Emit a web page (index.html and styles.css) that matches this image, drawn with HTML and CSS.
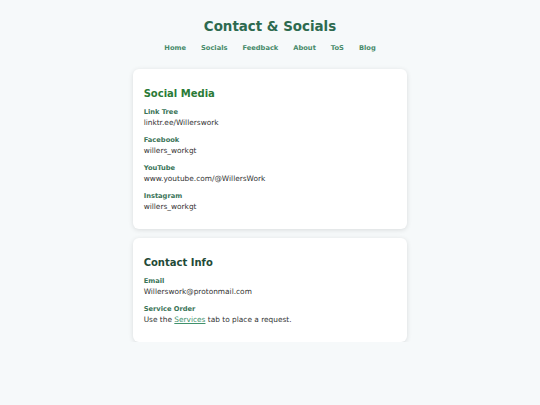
FILE: index.html
```html
<!DOCTYPE html>
<html lang="en">
<head>
<meta charset="utf-8">
<title>Contact &amp; Socials</title>
<link rel="stylesheet" href="styles.css">
</head>
<body>
  <header class="site-header">
    <h1 class="site-title">Contact &amp; Socials</h1>
    <nav class="nav">
      <a href="#">Home</a>
      <a href="#">Socials</a>
      <a href="#">Feedback</a>
      <a href="#">About</a>
      <a href="#">ToS</a>
      <a href="#">Blog</a>
    </nav>
  </header>
  <main class="main">
    <section class="card">
      <h2 class="card-title social">Social Media</h2>
      <div class="item">
        <div class="label">Link Tree</div>
        <div class="value">linktr.ee/Willerswork</div>
      </div>
      <div class="item">
        <div class="label">Facebook</div>
        <div class="value">willers_workgt</div>
      </div>
      <div class="item">
        <div class="label">YouTube</div>
        <div class="value">www.youtube.com/@WillersWork</div>
      </div>
      <div class="item">
        <div class="label">Instagram</div>
        <div class="value">willers_workgt</div>
      </div>
    </section>
    <section class="card">
      <h2 class="card-title contact">Contact Info</h2>
      <div class="item">
        <div class="label">Email</div>
        <div class="value">Willerswork@protonmail.com</div>
      </div>
      <div class="item">
        <div class="label">Service Order</div>
        <div class="value">Use the <a class="link" href="#">Services</a> tab to place a request.</div>
      </div>
    </section>
  </main>
</body>
</html>
```
FILE: styles.css
```css
* { box-sizing: border-box; }
html, body { margin: 0; padding: 0; }
body {
  background: #f6f9fa;
  font-family: "DejaVu Sans", Verdana, sans-serif;
  color: #333333;
}
.site-header {
  padding-top: 19px;
  text-align: center;
}
.site-title {
  margin: 0;
  font-size: 13.4px;
  line-height: 16px;
  font-weight: bold;
  color: #2d6a4f;
}
.nav {
  margin-top: 8.5px;
  display: flex;
  justify-content: center;
  gap: 15px;
}
.nav a {
  font-size: 6.7px;
  line-height: 9px;
  font-weight: bold;
  color: #478a69;
  text-decoration: none;
}
.main {
  width: 274px;
  margin: 16px auto 0;
  display: flex;
  flex-direction: column;
  gap: 9px;
}
.card {
  background: #ffffff;
  border-radius: 6px;
  box-shadow: 0 1px 5px rgba(0, 0, 0, 0.12);
  padding: 10.67px 10.67px 9px;
}
.card-title {
  margin: 8.5px 0 8.3px;
  font-size: 10px;
  line-height: 12px;
  font-weight: bold;
}
.card-title.social { color: #2a7a36; }
.card-title.contact { color: #1f4a37; }
.item { margin-bottom: 8px; }
.label {
  font-size: 6.7px;
  line-height: 9px;
  font-weight: bold;
  color: #3a7458;
}
.value {
  font-size: 7.4px;
  line-height: 11px;
  color: #333333;
}
.link {
  color: #40916c;
  text-decoration: underline;
}
```
